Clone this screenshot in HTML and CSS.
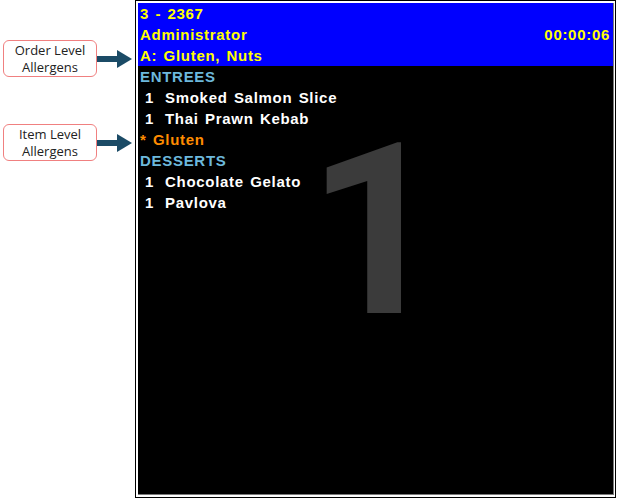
FILE: index.html
```html
<!DOCTYPE html>
<html>
<head>
<meta charset="utf-8">
<link rel="stylesheet" href="styles.css">
</head>
<body>
<div class="page">
  <div class="callouts">
    <div class="callout callout-order">
      <div class="label">Order Level<br>Allergens</div>
      <svg class="arrow" width="36" height="20" viewBox="0 0 36 20"><rect x="0" y="7" width="22" height="6" fill="#1b4b66"/><polygon points="20,1 35,10 20,19" fill="#1b4b66"/></svg>
    </div>
    <div class="callout callout-item">
      <div class="label">Item Level<br>Allergens</div>
      <svg class="arrow" width="36" height="20" viewBox="0 0 36 20"><rect x="0" y="7" width="22" height="6" fill="#1b4b66"/><polygon points="20,1 35,10 20,19" fill="#1b4b66"/></svg>
    </div>
  </div>
  <div class="frame">
    <div class="inner">
      <div class="watermark">1</div>
      <div class="header">
        <div class="row">3 - 2367</div>
        <div class="row split"><span>Administrator</span><span class="timer">00:00:06</span></div>
        <div class="row">A: Gluten, Nuts</div>
      </div>
      <div class="body">
        <div class="row course">ENTREES</div>
        <div class="row item"><span class="qty">1</span><span>Smoked Salmon Slice</span></div>
        <div class="row item"><span class="qty">1</span><span>Thai Prawn Kebab</span></div>
        <div class="row allergen">* Gluten</div>
        <div class="row course">DESSERTS</div>
        <div class="row item"><span class="qty">1</span><span>Chocolate Gelato</span></div>
        <div class="row item"><span class="qty">1</span><span>Pavlova</span></div>
      </div>
    </div>
  </div>
</div>
</body>
</html>
```
FILE: styles.css
```css
html, body {
  margin: 0;
  padding: 0;
  background: #ffffff;
}
.page {
  display: flex;
  width: 618px;
  height: 498px;
}
.callouts {
  width: 135px;
  flex: none;
  padding-top: 40px;
  box-sizing: border-box;
}
.callout {
  display: flex;
  align-items: center;
  margin-left: 3px;
}
.callout-item {
  margin-top: 47px;
}
.label {
  width: 94px;
  height: 37px;
  border: 1px solid #f08080;
  border-radius: 6px;
  background: #fff;
  font-family: "Open Sans", "Liberation Sans", sans-serif;
  font-size: 13px;
  line-height: 17px;
  color: #222;
  text-align: center;
  display: flex;
  align-items: center;
  justify-content: center;
  box-sizing: border-box;
  flex: none;
}
.arrow {
  display: block;
  margin-left: 0;
  flex: none;
}
.frame {
  width: 481px;
  height: 498px;
  border: 1px solid #000;
  padding: 2px 1px 2px 2px;
  box-sizing: border-box;
  background: #fff;
}
.inner {
  position: relative;
  height: 100%;
  background: #000;
  border-right: 1px solid #7a7a7a;
  border-bottom: 1px solid #7a7a7a;
  box-sizing: border-box;
  overflow: hidden;
  font-family: "Liberation Sans", Arial, sans-serif;
  font-weight: bold;
  font-size: 15px;
  letter-spacing: 0.7px;
  word-spacing: 1.5px;
}
.watermark {
  position: absolute;
  left: 169px;
  top: 138px;
  font-family: Roboto, sans-serif;
  font-weight: bold;
  font-size: 240px;
  line-height: 180px;
  letter-spacing: 0;
  color: #3b3b3b;
}
.header {
  position: relative;
  background: #0000ff;
  color: #ffff00;
  padding: 0 3px 0 2px;
}
.body {
  position: relative;
  padding: 0 2px;
}
.row {
  height: 21px;
  line-height: 21px;
  white-space: nowrap;
}
.split {
  display: flex;
  justify-content: space-between;
}
.course {
  color: #6db8dc;
}
.allergen {
  color: #ff8c00;
}
.item {
  color: #ffffff;
  display: flex;
  padding-left: 5px;
}
.qty {
  width: 20px;
}
```
